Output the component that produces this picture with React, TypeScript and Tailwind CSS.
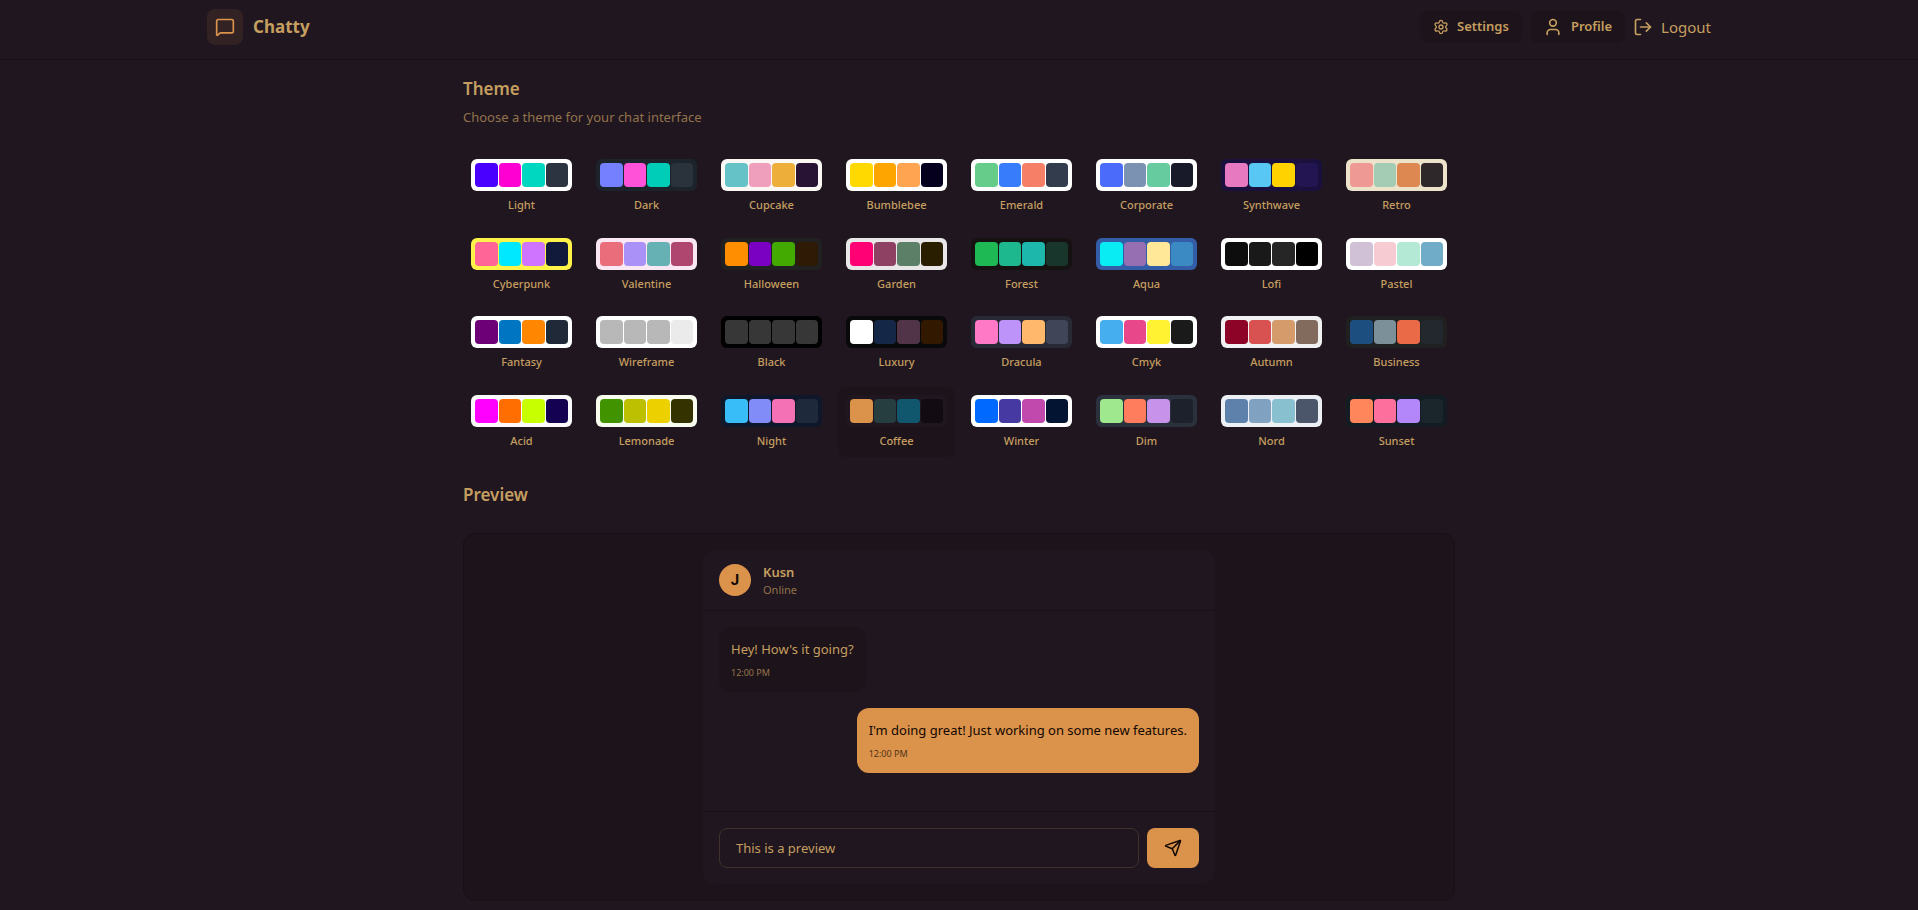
import { LogOut, MessageSquare, Send, Settings, User } from "lucide-react";

type Theme = { name: string; base: string; colors: [string, string, string, string] };

const THEMES: Theme[] = [
  { name: "Light", base: "#ffffff", colors: ["#4a00ff", "#ff00d3", "#00d7c0", "#2b3440"] },
  { name: "Dark", base: "#1d232a", colors: ["#7480ff", "#ff52d9", "#00cdb7", "#2a323c"] },
  { name: "Cupcake", base: "#faf7f5", colors: ["#65c3c8", "#ef9fbc", "#eeaf3a", "#291334"] },
  { name: "Bumblebee", base: "#ffffff", colors: ["#ffd900", "#ffa500", "#ffa552", "#05001e"] },
  { name: "Emerald", base: "#ffffff", colors: ["#66cc8a", "#377cfb", "#f68067", "#333c4d"] },
  { name: "Corporate", base: "#ffffff", colors: ["#4b6bfb", "#7b92b2", "#67cba0", "#181a2a"] },
  { name: "Synthwave", base: "#1a103d", colors: ["#e779c1", "#58c7f3", "#ffd200", "#221551"] },
  { name: "Retro", base: "#ece3ca", colors: ["#ef9995", "#a4cbb4", "#dc8850", "#2e282a"] },
  { name: "Cyberpunk", base: "#fff248", colors: ["#ff6596", "#00e8ff", "#ce74ff", "#111a3b"] },
  { name: "Valentine", base: "#fae7f4", colors: ["#e96d7b", "#a991f7", "#66b1b3", "#af4670"] },
  { name: "Halloween", base: "#212121", colors: ["#ff8f00", "#7a00c2", "#42aa00", "#2f1b05"] },
  { name: "Garden", base: "#e9e7e7", colors: ["#ff0075", "#8e4162", "#5c7f67", "#291e00"] },
  { name: "Forest", base: "#171212", colors: ["#1eb854", "#1db88e", "#1db8ab", "#19362d"] },
  { name: "Aqua", base: "#345da7", colors: ["#09ecf3", "#966fb3", "#ffe999", "#3b8ac4"] },
  { name: "Lofi", base: "#ffffff", colors: ["#0d0d0d", "#1a1919", "#262626", "#000000"] },
  { name: "Pastel", base: "#ffffff", colors: ["#d1c1d7", "#f6cbd1", "#b4e9d6", "#70acc7"] },
  { name: "Fantasy", base: "#ffffff", colors: ["#6d0076", "#0075c2", "#ff8600", "#1f2937"] },
  { name: "Wireframe", base: "#ffffff", colors: ["#b8b8b8", "#b8b8b8", "#b8b8b8", "#ebebeb"] },
  { name: "Black", base: "#000000", colors: ["#373737", "#373737", "#373737", "#373737"] },
  { name: "Luxury", base: "#09090b", colors: ["#ffffff", "#152747", "#513448", "#331800"] },
  { name: "Dracula", base: "#282a36", colors: ["#ff79c6", "#bd93f9", "#ffb86c", "#414558"] },
  { name: "Cmyk", base: "#ffffff", colors: ["#45aeee", "#e8488a", "#fff232", "#1a1a1a"] },
  { name: "Autumn", base: "#f1f1f1", colors: ["#8c0327", "#d85251", "#d59b6a", "#826a5c"] },
  { name: "Business", base: "#202020", colors: ["#1c4e80", "#7c909a", "#ea6947", "#23282f"] },
  { name: "Acid", base: "#fafafa", colors: ["#ff00ff", "#ff6e00", "#c8ff00", "#140151"] },
  { name: "Lemonade", base: "#f8fdef", colors: ["#419400", "#bdc000", "#edd000", "#343300"] },
  { name: "Night", base: "#0f172a", colors: ["#38bdf8", "#818cf8", "#f471b5", "#1e293b"] },
  { name: "Coffee", base: "#20161f", colors: ["#db924b", "#263e3f", "#10576d", "#120c12"] },
  { name: "Winter", base: "#ffffff", colors: ["#0069ff", "#463aa2", "#c148ac", "#021431"] },
  { name: "Dim", base: "#2a303c", colors: ["#9fe88d", "#ff7d5c", "#c792e9", "#1c212b"] },
  { name: "Nord", base: "#eceff4", colors: ["#5e81ac", "#81a1c1", "#88c0d0", "#4c566a"] },
  { name: "Sunset", base: "#121c22", colors: ["#ff865b", "#fd6f9c", "#b387fa", "#1b262c"] },
];

const ACTIVE_THEME = "Coffee";

const MESSAGES = [
  { id: 1, content: "Hey! How's it going?", sent: false },
  { id: 2, content: "I'm doing great! Just working on some new features.", sent: true },
];

function Navbar() {
  return (
    <header className="border-b border-[#181017]">
      <div className="mx-auto flex max-w-[1536px] items-center justify-between px-4 pt-[9px] pb-3.5">
        <a href="#home" className="flex items-center gap-2.5">
          <span className="flex size-9 items-center justify-center rounded-lg bg-[#db924b]/10">
            <MessageSquare className="size-5 text-[#db924b]" aria-hidden="true" />
          </span>
          <h1 className="text-[17px] leading-7 font-bold">Chatty</h1>
        </a>
        <nav className="flex items-center gap-2">
          <a
            href="#settings"
            className="flex h-8 items-center gap-2 rounded-lg bg-[#1d131a] px-[13px] text-[13px] font-semibold"
          >
            <Settings className="size-4" aria-hidden="true" />
            Settings
          </a>
          <a
            href="#profile"
            className="flex h-8 items-center gap-2 rounded-lg bg-[#1d131a] px-[13px] text-[13px] font-semibold"
          >
            <User className="size-5" aria-hidden="true" />
            Profile
          </a>
          <button type="button" className="flex items-center gap-2 text-[15px] leading-6">
            <LogOut className="size-5" aria-hidden="true" />
            Logout
          </button>
        </nav>
      </div>
    </header>
  );
}

function ThemeButton({ theme }: { theme: Theme }) {
  const active = theme.name === ACTIVE_THEME;
  return (
    <button
      type="button"
      aria-pressed={active}
      className={`flex flex-col items-center gap-1.5 rounded-lg p-2 ${active ? "bg-[#1d131a]" : ""}`}
    >
      <span
        className="grid h-8 w-full grid-cols-4 gap-px rounded-md p-1"
        style={{ backgroundColor: theme.base }}
      >
        {theme.colors.map((color, i) => (
          <span key={i} className="rounded" style={{ backgroundColor: color }} />
        ))}
      </span>
      <span className="w-full truncate text-center text-[11px] leading-normal font-medium">
        {theme.name}
      </span>
    </button>
  );
}

function ChatPreview() {
  return (
    <section className="rounded-xl border border-[#181017] bg-[#1d131a] p-4">
      <div className="mx-auto max-w-lg overflow-hidden rounded-xl bg-[#20161f]">
        <div className="flex items-center gap-3 border-b border-[#181017] px-4 py-3">
          <div className="flex size-8 items-center justify-center rounded-full bg-[#db924b] font-['Roboto',sans-serif] text-[15px] font-bold text-[#110802]">
            J
          </div>
          <div>
            <h3 className="text-[13px] leading-5 font-semibold">Kusn</h3>
            <p className="text-[11px] leading-4 text-[#c59f60]/70">Online</p>
          </div>
        </div>
        <div className="min-h-[200px] space-y-4 p-4">
          {MESSAGES.map((message) => (
            <div key={message.id} className={`flex ${message.sent ? "justify-end" : "justify-start"}`}>
              <div
                className={`max-w-[80%] rounded-xl p-3 ${
                  message.sent ? "bg-[#db924b] text-[#110802]" : "bg-[#1d131a]"
                }`}
              >
                <p className="text-[13px] leading-5">{message.content}</p>
                <p className="mt-1.5 text-[9px] leading-[15px] opacity-70">12:00 PM</p>
              </div>
            </div>
          ))}
        </div>
        <form className="flex gap-2 border-t border-[#181017] p-4" onSubmit={(e) => e.preventDefault()}>
          <input
            type="text"
            aria-label="Message"
            readOnly
            value="This is a preview"
            className="h-10 min-w-0 flex-1 rounded-lg border border-[#c59f60]/20 bg-transparent px-4 text-[13px] outline-none"
          />
          <button
            type="submit"
            aria-label="Send"
            className="flex h-10 items-center rounded-lg bg-[#db924b] px-[17px] text-[#110802]"
          >
            <Send size={18} aria-hidden="true" />
          </button>
        </form>
      </div>
    </section>
  );
}

export default function App() {
  return (
    <div className="min-h-screen bg-[#20161f] font-['Noto_Sans',sans-serif] text-[#c59f60]">
      <Navbar />
      <main className="mx-auto max-w-5xl space-y-6 px-4 pt-[15px] pb-2">
        <div className="space-y-1">
          <h2 className="text-[17px] leading-7 font-semibold">Theme</h2>
          <p className="text-[13px] leading-5 text-[#c59f60]/70">
            Choose a theme for your chat interface
          </p>
        </div>
        <div className="grid grid-cols-4 gap-2 md:grid-cols-6 lg:grid-cols-8">
          {THEMES.map((theme) => (
            <ThemeButton key={theme.name} theme={theme} />
          ))}
        </div>
        <h2 className="text-[17px] leading-7 font-semibold">Preview</h2>
        <ChatPreview />
      </main>
    </div>
  );
}
